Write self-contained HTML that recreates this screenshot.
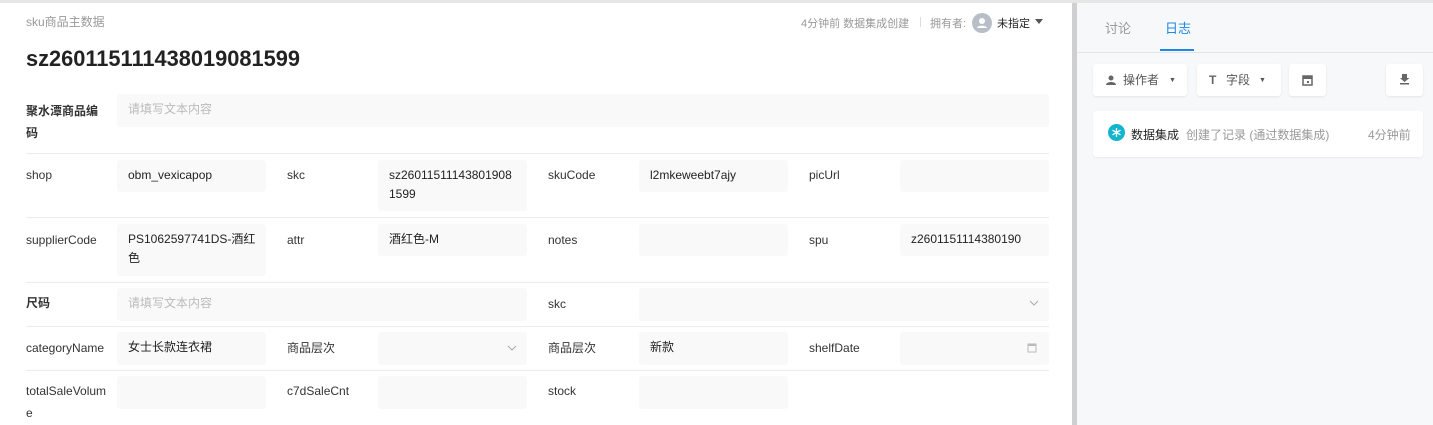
<!DOCTYPE html><html><head><meta charset="utf-8"><style>
*{box-sizing:border-box;margin:0;padding:0}
body{width:1433px;height:425px;overflow:hidden;background:#fff;font-family:"Liberation Sans","Noto Sans CJK SC",sans-serif;font-size:12px;color:#333;position:relative}
.a{position:absolute}
.in{position:absolute;background:#f9f9f9;border-radius:3px;padding:6px 11px;line-height:19px;color:#222;font-size:12px;white-space:nowrap}
.lb{position:absolute;line-height:19px;color:#333;font-size:12px;word-break:break-all;width:82px}
.sep{position:absolute;left:26px;width:1023px;height:1px;background:#ececec}
.ph{color:#bbb}
.btn{position:absolute;top:64px;height:32px;background:#fff;border-radius:3px;box-shadow:0 1px 2px rgba(0,0,0,.08);color:#555;font-size:12px;line-height:32px}
</style></head><body>
<div class="a" style="left:0;top:0;width:1433px;height:3px;background:#e6e6e6"></div>
<div class="a" style="left:26px;top:13px;color:#999;font-size:12px">sku商品主数据</div>
<div class="a" style="left:26px;top:46px;font-size:21.8px;font-weight:bold;color:#222">sz260115111438019081599</div>
<div class="a" style="left:801px;top:15px;color:#999;font-size:11px">4分钟前 数据集成创建</div>
<div class="a" style="left:920px;top:17px;width:1px;height:10px;background:#ddd"></div>
<div class="a" style="left:930px;top:15px;color:#999;font-size:11px">拥有者:</div>
<div class="a" style="left:972px;top:13px;width:20px;height:20px;border-radius:50%;background:#b8bec8"><svg width="20" height="20" viewBox="0 0 20 20"><circle cx="10" cy="8" r="3" fill="#fff"/><path d="M5 15c0-3 10-3 10 0z" fill="#fff"/></svg></div>
<div class="a" style="left:997px;top:15px;color:#222;font-size:11px">未指定</div>
<div class="a" style="left:1035px;top:19px;border-left:4px solid transparent;border-right:4px solid transparent;border-top:5px solid #555"></div>

<div class="lb" style="left:26px;top:100px;width:76px;line-height:22px;font-weight:bold">聚水潭商品编码</div>
<div class="in ph" style="left:117px;top:94px;width:932px;height:33px">请填写文本内容</div>
<div class="sep" style="top:153px"></div>

<div class="lb" style="left:26px;top:166px">shop</div>
<div class="in" style="left:117px;top:160px;width:149px;height:32px">obm_vexicapop</div>
<div class="lb" style="left:287px;top:166px">skc</div>
<div class="in" style="left:378px;top:160px;width:149px;height:51px">sz26011511143801908<br>1599</div>
<div class="lb" style="left:548px;top:166px">skuCode</div>
<div class="in" style="left:639px;top:160px;width:149px;height:32px">l2mkeweebt7ajy</div>
<div class="lb" style="left:809px;top:166px">picUrl</div>
<div class="in" style="left:900px;top:160px;width:149px;height:32px"></div>
<div class="sep" style="top:217px"></div>

<div class="lb" style="left:26px;top:231px">supplierCode</div>
<div class="in" style="left:117px;top:224px;width:149px;height:52px">PS1062597741DS-酒红<br>色</div>
<div class="lb" style="left:287px;top:231px">attr</div>
<div class="in" style="left:378px;top:224px;width:149px;height:32px">酒红色-M</div>
<div class="lb" style="left:548px;top:231px">notes</div>
<div class="in" style="left:639px;top:224px;width:149px;height:32px"></div>
<div class="lb" style="left:809px;top:231px">spu</div>
<div class="in" style="left:900px;top:224px;width:149px;height:32px">z2601151114380190</div>
<div class="sep" style="top:282px"></div>

<div class="lb" style="left:26px;top:294px;font-weight:bold">尺码</div>
<div class="in ph" style="left:117px;top:288px;width:410px;height:33px">请填写文本内容</div>
<div class="lb" style="left:548px;top:295px">skc</div>
<div class="in" style="left:639px;top:288px;width:410px;height:33px"><svg class="a" style="right:10px;top:12px" width="10" height="6"><path d="M1 1l4 4 4-4" stroke="#aaa" fill="none"/></svg></div>
<div class="sep" style="top:326px"></div>

<div class="lb" style="left:26px;top:339px">categoryName</div>
<div class="in" style="left:117px;top:332px;width:149px;height:33px">女士长款连衣裙</div>
<div class="lb" style="left:287px;top:339px">商品层次</div>
<div class="in" style="left:378px;top:332px;width:149px;height:33px"><svg class="a" style="right:10px;top:13px" width="10" height="6"><path d="M1 1l4 4 4-4" stroke="#aaa" fill="none"/></svg></div>
<div class="lb" style="left:548px;top:339px">商品层次</div>
<div class="in" style="left:639px;top:332px;width:149px;height:33px">新款</div>
<div class="lb" style="left:809px;top:339px">shelfDate</div>
<div class="in" style="left:900px;top:332px;width:149px;height:33px"><svg class="a" style="right:12px;top:10px" width="10" height="11"><rect x="1" y="2" width="8" height="8" fill="none" stroke="#bbb"/><rect x="1" y="2" width="8" height="2" fill="#bbb"/></svg></div>
<div class="sep" style="top:370px"></div>

<div class="lb" style="left:26px;top:380px;width:90px;line-height:22px;white-space:nowrap">totalSaleVolum<br>e</div>
<div class="in" style="left:117px;top:376px;width:149px;height:33px"></div>
<div class="lb" style="left:287px;top:382px">c7dSaleCnt</div>
<div class="in" style="left:378px;top:376px;width:149px;height:33px"></div>
<div class="lb" style="left:548px;top:382px">stock</div>
<div class="in" style="left:639px;top:376px;width:149px;height:33px"></div>

<div class="a" style="left:1072px;top:3px;width:5px;height:422px;background:#cfcfcf"></div>
<div class="a" style="left:1077px;top:3px;width:356px;height:422px;background:#f7f8fa"></div>
<div class="a" style="left:1105px;top:18px;font-size:13px;color:#999">讨论</div>
<div class="a" style="left:1165px;top:18px;font-size:13px;color:#1e88e5">日志</div>
<div class="a" style="left:1160px;top:49px;width:34px;height:2px;background:#1e88e5"></div>
<div class="a" style="left:1077px;top:52px;width:356px;height:1px;background:#e3e3e3"></div>
<div class="btn" style="left:1093px;width:94px"><svg class="a" style="left:13px;top:11px" width="10" height="10"><circle cx="5" cy="3" r="2.5" fill="#666"/><path d="M0 10c0-4 10-4 10 0z" fill="#666"/></svg><span class="a" style="left:30px">操作者</span><span class="a" style="left:76px;font-size:7px;top:1px">▼</span></div>
<div class="btn" style="left:1197px;width:84px"><span class="a" style="left:12px;font-weight:bold;color:#666">T</span><span class="a" style="left:29px">字段</span><span class="a" style="left:62px;font-size:7px;top:1px">▼</span></div>
<div class="btn" style="left:1289px;width:37px"><svg class="a" style="left:13px;top:10px" width="11" height="12"><rect x="1" y="2" width="9" height="9" fill="none" stroke="#666" stroke-width="1.5"/><rect x="1" y="2" width="9" height="3" fill="#666"/><rect x="5" y="7" width="2" height="2" fill="#666"/></svg></div>
<div class="btn" style="left:1386px;width:37px"><svg class="a" style="left:13px;top:9px" width="11" height="12"><path d="M3 1h5v4h2.5L5.5 9 1 5h2z" fill="#666"/><rect x="1" y="10" width="9" height="1.5" fill="#666"/></svg></div>
<div class="a" style="left:1093px;top:111px;width:330px;height:46px;background:#fff;border-radius:3px;box-shadow:0 1px 2px rgba(0,0,0,.06)"></div>
<div class="a" style="left:1108px;top:124px;width:17px;height:17px;border-radius:50%;background:#13b5ce"><svg class="a" style="left:3px;top:3px" width="11" height="11" viewBox="0 0 11 11"><path d="M5.5 1v9M1.5 3.2l8 4.6M1.5 7.8l8-4.6" stroke="#fff" stroke-width="1.3"/></svg></div>
<div class="a" style="left:1131px;top:126px;font-size:12px;color:#222">数据集成</div>
<div class="a" style="left:1186px;top:126px;font-size:12px;color:#999">创建了记录 (通过数据集成)</div>
<div class="a" style="left:1368px;top:126px;font-size:12px;color:#999">4分钟前</div>
</body></html>
